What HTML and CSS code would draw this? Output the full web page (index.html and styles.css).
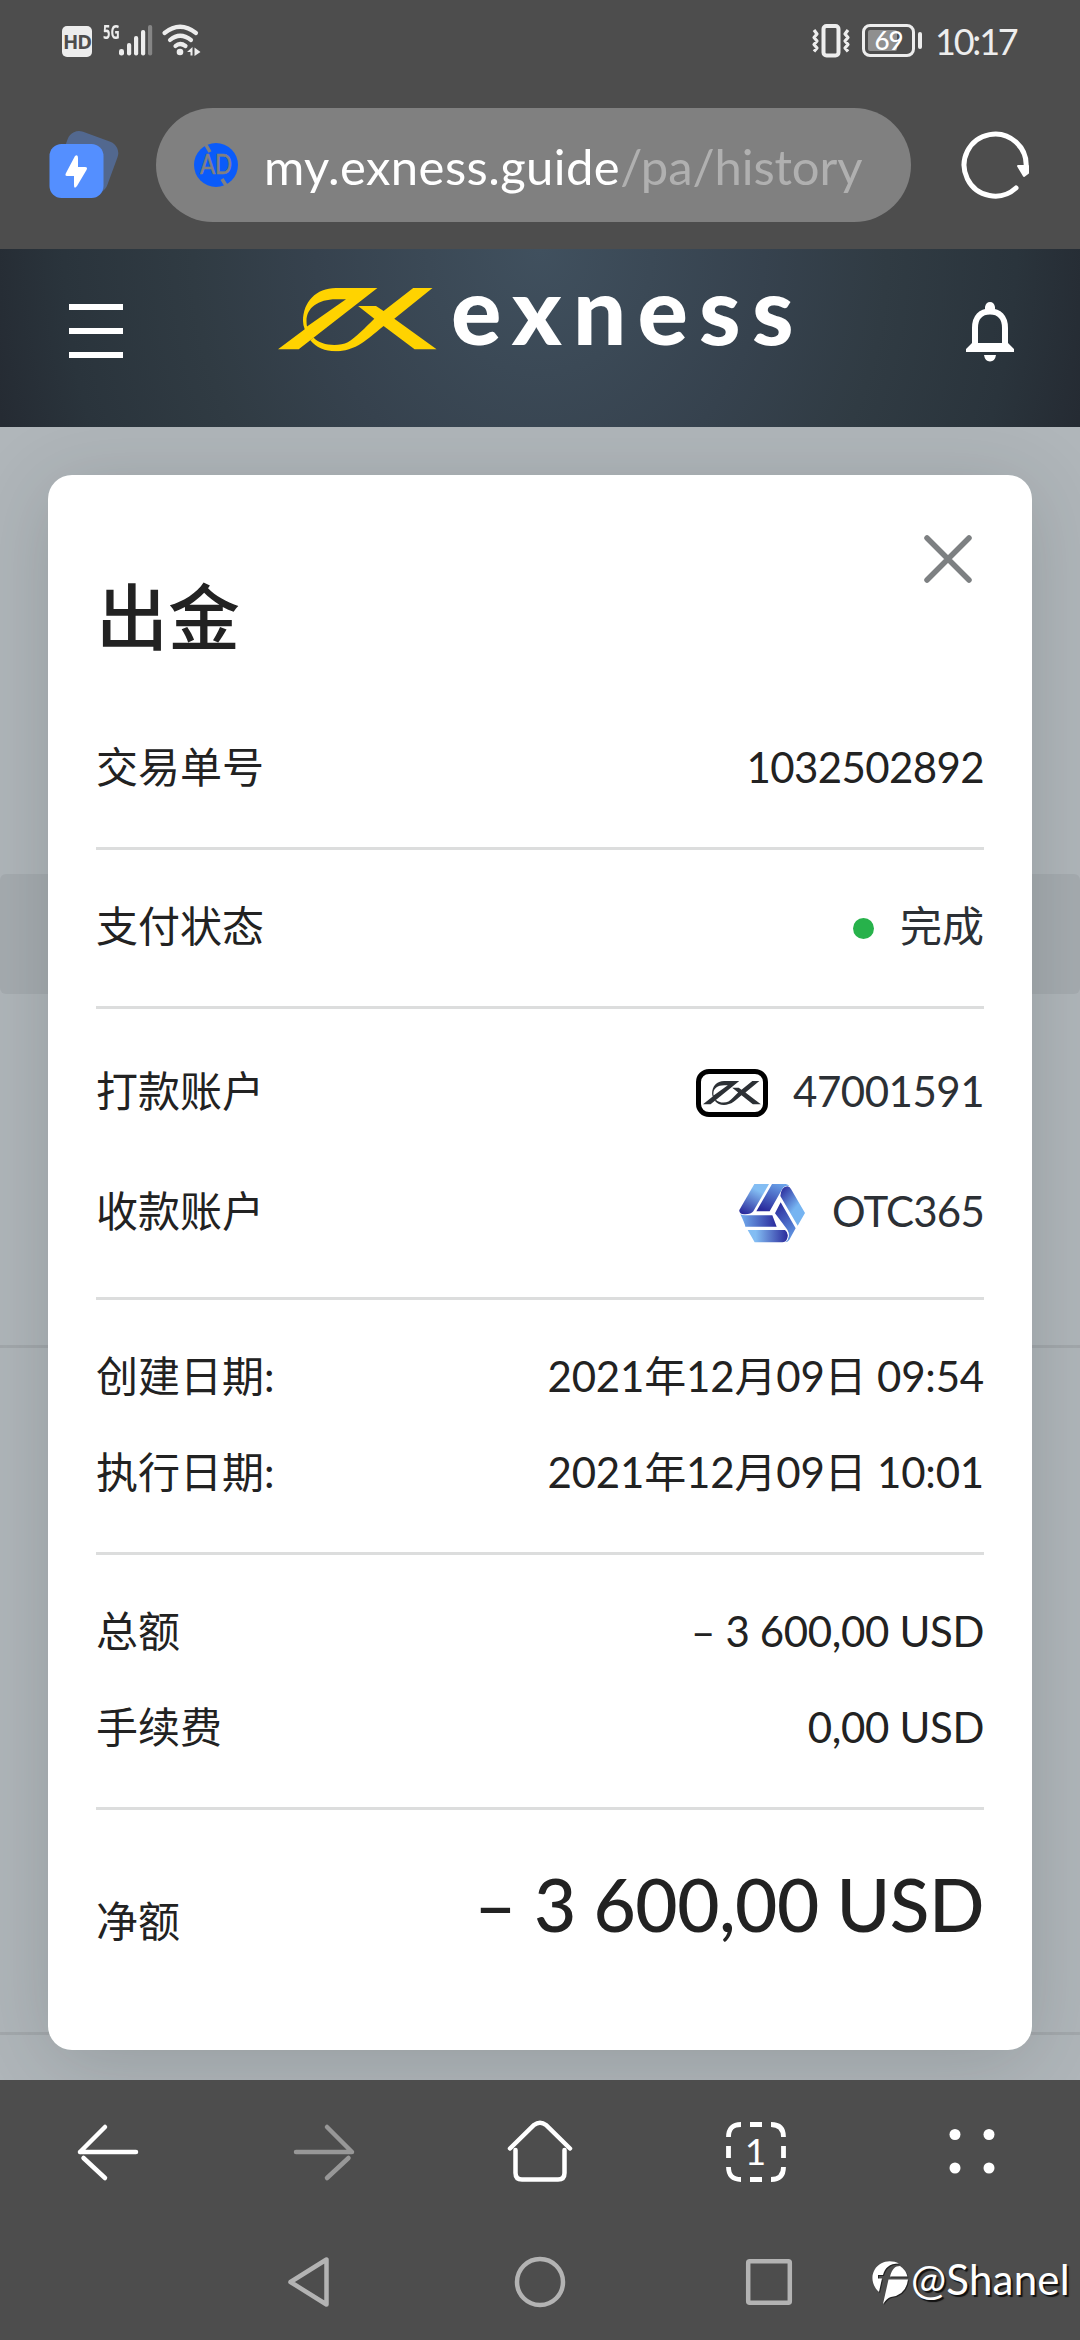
FILE: index.html
```html
<!DOCTYPE html>
<html lang="zh-CN">
<head>
<meta charset="utf-8">
<title>出金</title>
<link rel="stylesheet" href="styles.css">
</head>
<body>
<svg width="0" height="0" class="defs">
  <symbol id="ex-mark" viewBox="0 0 159 63.5">
    <path fill-rule="evenodd" d="M99.4 0H58C38 0 25 14 25 33Q25 37 26.7 41.3L0 61.3H20.7ZM68 11.3L29 38.6Q28.5 36 28.5 33C28.5 20 40 11.3 58 11.3Z"/>
    <path d="M135.2 0H154.5L116.3 30.7L158.6 61.3H136.6L105.6 38C96 46 90 51 84 55C66 67 43 66 32.3 52.3L35.5 49.5C42 57.5 60 59 69.8 54.3C78 49 87 40 96.3 30.7L80.1 18H98L105.6 23Z"/>
  </symbol>
</svg>
<div class="screen">
  <header class="chrome">
    <div class="status">
      <div class="status-left">
        <span class="hd">HD</span>
        <span class="net">5G</span>
        <svg class="signal" width="34" height="32" viewBox="0 0 34 32"><g fill="#ededed"><rect x="0" y="25" width="5" height="6.500" rx="2.300"/><rect x="8" y="19" width="4.200" height="12.500" rx="2"/><rect x="15" y="12" width="4.200" height="19.500" rx="2"/><rect x="22" y="6" width="4.200" height="25.500" rx="2"/><rect x="29" y="1" width="4.200" height="30.500" rx="2" opacity=".35"/></g></svg>
        <svg class="wifi" width="40" height="33" viewBox="0 0 40 33"><g fill="none" stroke="#ededed" stroke-width="4.200" stroke-linecap="round"><path d="M2.500 9Q18 -3.500 34 9M8 16Q18 7.500 29 16M13.500 22Q18 18 23.500 22"/></g><circle cx="18" cy="28" r="3.300" fill="#ededed"/><path d="M25 28L30.500 23V31.500H28.500V28ZM32.500 23.500L38.500 28L32.500 32Z" fill="#ededed"/></svg>
      </div>
      <div class="status-right">
        <svg width="38" height="34" viewBox="0 0 38 34"><rect x="11.500" y="2" width="15" height="29.500" rx="3" fill="none" stroke="#ededed" stroke-width="4"/><path d="M2 6L5 10L2 13.500L5 17L2 20.500L5 24L2 27.500M36 6L33 10L36 13.500L33 17L36 20.500L33 24L36 27.500" fill="none" stroke="#ededed" stroke-width="3.200" stroke-linejoin="round"/></svg>
        <span class="battery"><span class="battery-fill"></span><span class="battery-num">69</span></span><span class="battery-tip"></span>
        <span class="clock">10:17</span>
      </div>
    </div>
    <div class="address">
      <svg class="boost" width="72" height="70" viewBox="0 0 72 70"><rect x="13" y="5" width="53" height="54" rx="12" fill="#52688f" transform="rotate(20 39 32)"/><rect x="1.500" y="14" width="54" height="54" rx="12" fill="#548fff"/><path d="M27 26Q30 24 30 28V37H37Q40 37 38.500 40L29 56Q26 60 26 55V46H19Q16.500 46 18 43Z" fill="#fff"/></svg>
      <div class="pill">
        <svg width="44" height="44" viewBox="0 0 44 44"><circle cx="22" cy="22" r="22" fill="#0a5bfa"/><path d="M12 2L16 9M28 36L33 44" stroke="#808080" stroke-width="3.500"/><text x="22" y="31" text-anchor="middle" class="ad" textLength="32" lengthAdjust="spacingAndGlyphs">AD</text></svg>
        <span class="url"><span class="host">my.exness.guide</span><span class="path">/pa/history</span></span>
      </div>
      <svg class="reload" width="70" height="70" viewBox="0 0 70 70"><path d="M54 58A31 31 0 1 1 64 38" fill="none" stroke="#fff" stroke-width="5" stroke-linecap="round"/><path d="M56 36H66V43L62 46Z" fill="#fff" stroke="#fff" stroke-width="2" stroke-linejoin="round"/></svg>
    </div>
  </header>
  <nav class="site">
    <span class="menu"><i></i><i></i><i></i></span>
    <span class="brand"><svg width="159" height="63.500"><use href="#ex-mark"/></svg><b>exness</b></span>
    <svg class="bell" width="48" height="60" viewBox="0 0 48 60"><path d="M9 44V26C9 15 15 9.500 24 9.500S39 15 39 26V44" fill="none" stroke="#fff" stroke-width="6"/><path d="M19 9V5Q20 0 24 0T29 5V9ZM6 41H42L48 47V50H0V47ZM18 53H30Q29 59.500 24 59.500T18 53Z" fill="#fff"/></svg>
  </nav>
  <main class="page">
    <div class="band"></div><div class="rule rule-a"></div><div class="rule rule-b"></div>
    <section class="card">
      <svg class="close" width="50" height="50" viewBox="0 0 50 50"><path d="M4 4L46 46M46 4L4 46" stroke="#7d8082" stroke-width="5.500" stroke-linecap="round"/></svg>
      <h1>出金</h1>
      <div class="group first"><div class="row"><span>交易单号</span><span class="id">1032502892</span></div></div>
      <div class="group"><div class="row"><span>支付状态</span><div class="value"><i class="dot"></i><span>完成</span></div></div></div>
      <div class="group accounts">
        <div class="row"><span>打款账户</span><div class="value"><i class="badge"><svg width="58" height="24" viewBox="0 0 159 63.500" preserveAspectRatio="none"><use href="#ex-mark" width="159" height="63.500"/></svg></i><span class="acct">47001591</span></div></div>
        <div class="row"><span>收款账户</span><div class="value otc">
          <svg width="66" height="59" viewBox="0 0 198 177">
            <defs>
              <linearGradient id="ga" x1=".7" y1="0" x2=".2" y2="1"><stop offset=".2" stop-color="#83bdf3"/><stop offset="1" stop-color="#2a2a9c"/></linearGradient>
              <linearGradient id="gb" x1=".8" y1="0" x2=".3" y2="1"><stop offset="0" stop-color="#6ba4ea"/><stop offset="1" stop-color="#2a2a9c"/></linearGradient>
              <linearGradient id="gc" x1=".1" y1="0" x2=".7" y2=".8"><stop offset="0" stop-color="#2a2a9c"/><stop offset=".75" stop-color="#76b4f1"/></linearGradient>
              <linearGradient id="gd" x1=".2" y1="0" x2=".6" y2="1"><stop offset="0" stop-color="#2a2a9c"/><stop offset="1" stop-color="#6198e4"/></linearGradient>
              <linearGradient id="ge"><stop offset="0" stop-color="#73adee"/><stop offset="1" stop-color="#2a2a9c"/></linearGradient>
              <linearGradient id="gf"><stop offset=".2" stop-color="#83bdf3"/><stop offset="1" stop-color="#2a2a9c"/></linearGradient>
            </defs>
            <path fill="url(#ga)" d="M46 0H90L43 82Q36 92 15 91Q0 90 1 78Z"/>
            <path fill="url(#gb)" d="M99 0H140Q148 1 151 6Q136 3 128 18L92 82H52Z"/>
            <path fill="url(#gc)" d="M124 36Q127 8 145 7Q152 8 156 15L198 87L176 125Z"/>
            <path fill="url(#gd)" d="M125 55L170 133L151 167Q147 174 139 175Q158 158 145 137L108 88Z"/>
            <path fill="url(#ge)" d="M4 91Q10 94 20 94H100L113 128H19Q18 120 4 91Z"/>
            <path fill="url(#gf)" d="M26 138H138Q151 148 144 165Q140 175 130 175H47Z"/>
          </svg><span>OTC365</span></div></div>
      </div>
      <div class="group"><div class="row"><span>创建日期:</span><span class="date">2021年12月09日 09:54</span></div><div class="row"><span>执行日期:</span><span class="date">2021年12月09日 10:01</span></div></div>
      <div class="group"><div class="row"><span>总额</span><span class="usd">– 3 600,00 USD</span></div><div class="row"><span>手续费</span><span class="usd">0,00 USD</span></div></div>
      <div class="net-row"><span>净额</span><strong>– 3 600,00 USD</strong></div>
    </section>
  </main>
  <footer class="bottom">
    <div class="tools">
      <svg width="66" height="66" viewBox="0 0 66 66"><path d="M5 33H61M5 33L30 8M8.500 39L30 59" fill="none" stroke="#fff" stroke-width="4.500" stroke-linecap="round"/></svg>
      <svg width="66" height="66" viewBox="0 0 66 66" opacity=".42"><path d="M5 33H61L36 8M57.500 39L36 59" fill="none" stroke="#fff" stroke-width="4.500" stroke-linecap="round" stroke-linejoin="round"/></svg>
      <svg width="66" height="66" viewBox="0 0 66 66"><path d="M3 29.500L27 6Q33 1.500 39 6L63 29.500M8.500 31V54Q8.500 60.500 15 60.500H51Q57.500 60.500 57.500 54V31" fill="none" stroke="#fff" stroke-width="4.500" stroke-linecap="round"/></svg>
      <svg width="66" height="66" viewBox="0 0 66 66"><path d="M5.500 18Q5.500 5.500 18 5.500M48 5.500Q60.500 5.500 60.500 18M60.500 48Q60.500 60.500 48 60.500M18 60.500Q5.500 60.500 5.500 48M27 5.500H39M27 60.500H39M5.500 27V39M60.500 27V39" fill="none" stroke="#fff" stroke-width="4.800"/><text x="32.500" y="46" text-anchor="middle" class="tabs">1</text></svg>
      <svg width="66" height="66" viewBox="0 0 66 66"><g fill="#fff"><circle cx="16" cy="15.500" r="5.500"/><circle cx="50" cy="15.500" r="5.500"/><circle cx="16" cy="49" r="5.500"/><circle cx="50" cy="49" r="5.500"/></g></svg>
    </div>
    <div class="system">
      <svg width="52" height="54" viewBox="0 0 52 54"><path d="M41.500 4.500V49.500L5.500 27Z" fill="none" stroke="#b3b3b3" stroke-width="4.500" stroke-linejoin="round"/></svg>
      <svg width="52" height="54" viewBox="0 0 52 54"><circle cx="26" cy="27" r="23" fill="none" stroke="#b3b3b3" stroke-width="4.500"/></svg>
      <svg width="52" height="54" viewBox="0 0 52 54"><rect x="5.200" y="6.200" width="41.600" height="41.600" rx="1.500" fill="none" stroke="#b3b3b3" stroke-width="4.500"/></svg>
    </div>
    <div class="watermark">
      <svg width="37" height="44" viewBox="0 0 37 44"><path d="M7 31C-3 22 -1 8 9 2.500C15 -1 22 0 27 2.500C17 2.500 13 7 11 14H6V17.500H10ZM18 15.500C20 8 23 5 28 5Q34 9 35.500 15.500ZM16.500 18.500H36Q34 34 19 36Q15 37 11 43Z" fill="#fff"/></svg>
      <span>@Shanel</span>
    </div>
  </footer>
</div>
</body>
</html>
```
FILE: styles.css
```css
* { box-sizing: border-box; }
body { margin: 0; font-family: Lato, "Noto Sans CJK SC", sans-serif; }
svg { display: block; flex: none; overflow: visible; }
i { display: block; }
.defs { position: absolute; }
.screen { width: 1080px; height: 2340px; display: flex; flex-direction: column; overflow: hidden; }

.chrome { height: 249px; background: #4d4d4d; }
.status { height: 108px; padding: 24px 62px 0; display: flex; justify-content: space-between; }
.status-left, .status-right { display: flex; align-items: flex-start; }
.hd { width: 30px; height: 31px; margin-top: 2px; border-radius: 5px; background: #ededed; color: #4d4d4d; font: 700 20px/32px "Open Sans", sans-serif; letter-spacing: -1px; text-align: center; }
.net { width: 16px; margin: -1px 0 0 11px; color: #ededed; font: 700 19px/18px "Open Sans", sans-serif; transform: scaleX(.68); transform-origin: 0 0; }
.wifi { margin-left: 9px; }
.battery { position: relative; width: 53px; height: 33px; margin-left: 12px; border: 3px solid #ededed; border-radius: 8px; display: flex; padding: 3px; }
.battery-fill { width: 29px; background: #8f8f8f; border-radius: 2px; }
.battery-num { position: absolute; inset: 0; color: #fff; font: 500 26px/27px Lato, sans-serif; text-align: center; letter-spacing: -1px; }
.battery-tip { width: 4px; height: 17px; margin: 8px 0 0 3px; border-radius: 2px; background: #ededed; }
.clock { width: 83px; margin: -5px 0 0 13px; color: #ededed; font-size: 36px; line-height: 44px; letter-spacing: -2.200px; white-space: nowrap; }

.address { height: 114px; display: flex; align-items: center; padding-left: 48px; }
.boost { margin-top: -1px; }
.pill { width: 755px; height: 114px; margin-left: 36px; padding-left: 38px; border-radius: 57px; background: #808080; display: flex; align-items: center; }
.ad { font: 27px Lato, sans-serif; fill: #808080; stroke: #808080; stroke-width: .6px; }
.url { margin-left: 26px; font-size: 49px; line-height: 60px; padding-top: 2px; white-space: nowrap; }
.host { color: #fff; letter-spacing: .42px; }
.path { color: #b0b0b0; letter-spacing: -.1px; }
.reload { margin-left: 51px; }

.site { height: 178px; display: flex; background: radial-gradient(ellipse 560px 620px at 50% 0, #40505e 0, #36424e 40%, #303b43 62%, #2a343c 85%, #252b33 100%); }
.menu { width: 54px; margin: 55px 0 0 69px; display: flex; flex-direction: column; gap: 18px; }
.menu i { height: 6px; background: #fff; }
.brand { display: flex; width: 520px; margin: 39px 0 0 155px; fill: #ffd300; }
.brand b { margin: -36px 0 0 14px; color: #fff; font: 900 94px/113px Lato, sans-serif; letter-spacing: 11.200px; }
.bell { margin: 53px 0 0 168px; }

.page { position: relative; height: 1653px; background: #b0b6ba; padding: 48px 48px 0; overflow: hidden; }
.band { position: absolute; left: 0; top: 447px; width: 100%; height: 120px; border-radius: 6px; background: #a6acb0; }
.rule { position: absolute; left: 0; width: 100%; height: 3px; background: #a3a8ac; }
.rule-a { top: 918px; }
.rule-b { top: 1605px; }
.card { position: relative; height: 1575px; padding: 93px 48px 0; border-radius: 24px; background: #fff; box-shadow: 0 12px 80px rgba(34, 40, 44, .19); color: #222; font-size: 42px; line-height: 56px; }
.close { position: absolute; right: 59px; top: 59px; }
h1 { margin: -2px 0 2px; height: 123px; font-size: 72px; line-height: 100px; font-weight: 500; }
.group { padding: 48px 0; border-bottom: 3px solid #dcdddd; display: flex; flex-direction: column; gap: 36px; }
.first { height: 159px; }
.row { height: 60px; display: flex; justify-content: space-between; align-items: center; white-space: nowrap; }
.row span { padding-bottom: 4px; }
.id { letter-spacing: -.6px; }
.date { letter-spacing: -.18px; }
.usd { letter-spacing: -.35px; }
.accounts { gap: 48px; }
.accounts .row { height: 72px; }
.value { display: flex; align-items: center; color: #2c3035; }
.dot { width: 21px; height: 21px; margin-right: 26px; border-radius: 50%; background: #27b24b; }
.badge { width: 72px; height: 48px; margin-right: 25px; border: 5px solid #000; border-radius: 13px; display: flex; align-items: center; justify-content: center; fill: #2c3035; }
.acct { letter-spacing: -.5px; }
.otc { letter-spacing: -.8px; }
.otc svg { margin-right: 27px; }
.net-row { display: flex; justify-content: space-between; align-items: baseline; padding-top: 46px; white-space: nowrap; }
.net-row span { position: relative; top: 5px; }
.net-row strong { font-size: 73px; line-height: 96px; font-weight: 500; letter-spacing: -.55px; }

.bottom { position: relative; height: 260px; background: #4d4d4d; }
.tools { height: 144px; display: grid; grid-template-columns: repeat(5, 1fr); place-items: center; }
.tabs { font: 37px Lato, sans-serif; fill: #fff; }
.system { display: flex; justify-content: center; gap: 177px; margin-top: 31px; }
.watermark { position: absolute; left: 872px; top: 181px; display: flex; color: #fff; font-size: 42px; line-height: 48px; text-shadow: 2px 2px 1px #111; }
.watermark svg { filter: drop-shadow(1px 1px 0 #222); }
.watermark span { margin: -6px 0 0 2px; letter-spacing: .2px; }
```
